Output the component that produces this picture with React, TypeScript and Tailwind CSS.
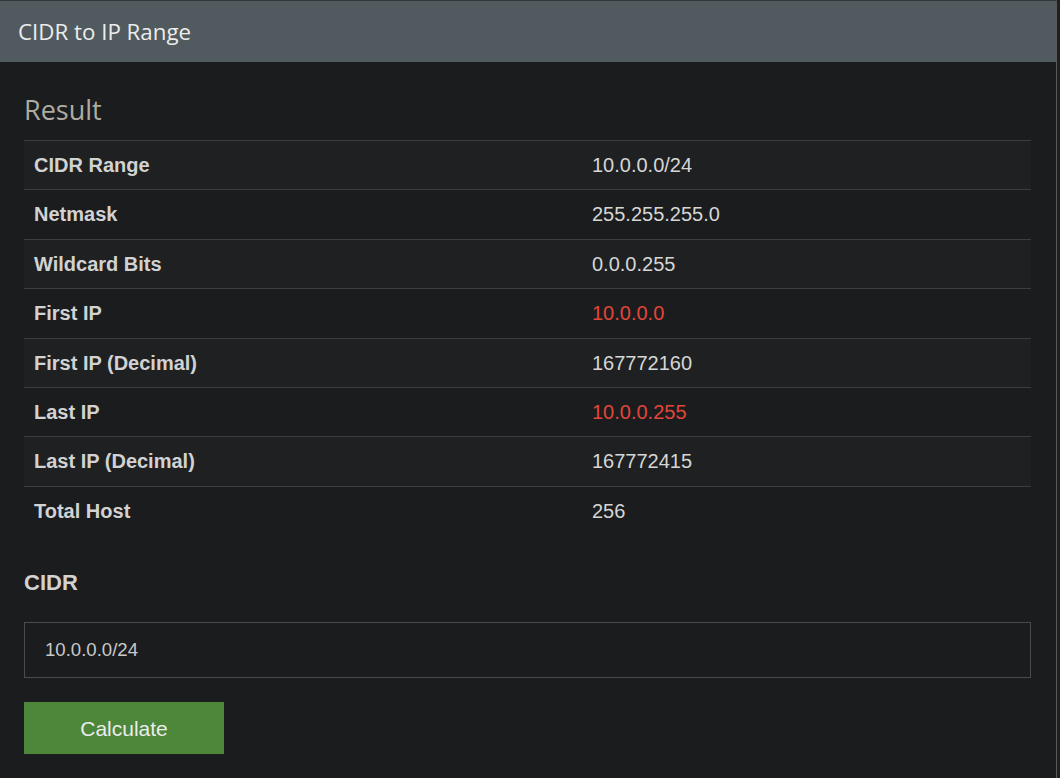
import React, { useState } from 'react';

const rows: { label: string; value: string; red?: boolean }[] = [
    { label: 'CIDR Range', value: '10.0.0.0/24' },
    { label: 'Netmask', value: '255.255.255.0' },
    { label: 'Wildcard Bits', value: '0.0.0.255' },
    { label: 'First IP', value: '10.0.0.0', red: true },
    { label: 'First IP (Decimal)', value: '167772160' },
    { label: 'Last IP', value: '10.0.0.255', red: true },
    { label: 'Last IP (Decimal)', value: '167772415' },
    { label: 'Total Host', value: '256' },
];

const App = () => {
    const [cidr, setCidr] = useState('10.0.0.0/24');

    return (
        <div className="w-full h-screen bg-[#1f2022] overflow-hidden">
            <div className="w-[1057px] h-full bg-[#1b1c1e] border-t border-t-[#35383a] border-r border-r-[#56595c]">
                {/* Header */}
                <div className="h-[61px] bg-[#515a5e] flex items-center px-[18px] pt-[2px]">
                    <h1 className="text-[22.3px] leading-none text-[#ececec] font-['Open_Sans',sans-serif]">CIDR to IP Range</h1>
                </div>

                <div className="pl-6 pr-[25px] pt-[33px] font-['Liberation_Sans',Arial,sans-serif]">
                    <h2 className="text-[27px] leading-[30px] text-[#aeaca2] font-['Open_Sans',sans-serif] mb-[15px]">Result</h2>

                    <table className="w-full border-collapse">
                        <tbody>
                            {rows.map((r, i) => (
                                <tr key={r.label} className={`border-t border-[#3b3d3f] ${i % 2 === 0 ? 'bg-[#1e2021]' : ''}`}>
                                    <td className="w-[558px] px-[10px] py-3 text-[20px] leading-[24.4px] font-bold text-[#d2d2d2]">{r.label}</td>
                                    <td className={`px-[10px] py-3 text-[20px] leading-[24.4px] ${r.red ? 'text-[#e1463a]' : 'text-[#d6d6d6]'}`}>{r.value}</td>
                                </tr>
                            ))}
                        </tbody>
                    </table>

                    <label className="block mt-[35px] text-[22px] leading-[26px] font-bold text-[#d2d2d2]">CIDR</label>

                    <input
                        type="text"
                        value={cidr}
                        onChange={(e) => setCidr(e.target.value)}
                        className="mt-[26px] block w-full h-[56px] border border-[#494b4d] bg-transparent px-5 text-[18.6px] text-[#c9c9c9] outline-none font-['Liberation_Sans',Arial,sans-serif]"
                    />

                    <button className="mt-6 w-[200px] h-[52px] bg-[#4c873a] text-[#ececec] text-[21px] font-['Liberation_Sans',Arial,sans-serif]">
                        Calculate
                    </button>
                </div>
            </div>
        </div>
    );
};

export default App;
